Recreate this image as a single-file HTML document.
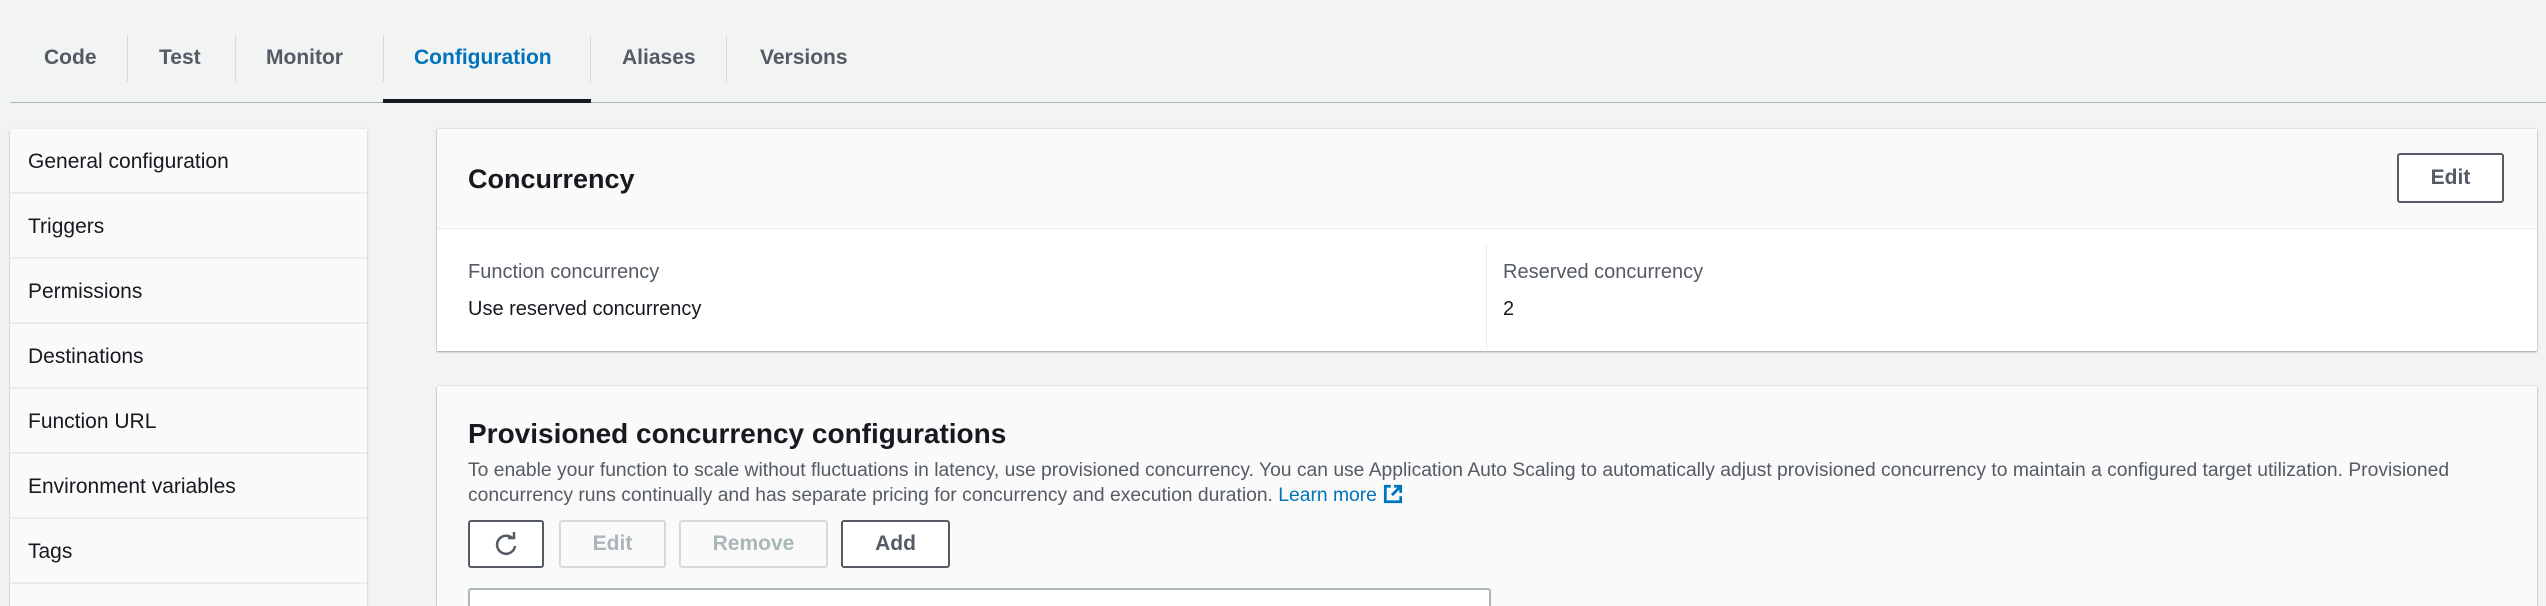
<!DOCTYPE html>
<html style="width:2546px;height:606px;overflow:hidden"><head><meta charset="utf-8"><style>
*{box-sizing:border-box;margin:0;padding:0}
body{width:2546px;height:606px;overflow:hidden;background:#f2f3f3;font-family:"Liberation Sans",sans-serif;color:#16191f;position:relative}
.abs{position:absolute}
.tab{position:absolute;top:44px;font-size:21px;font-weight:bold;color:#545b64;line-height:28px}
.sep{position:absolute;top:35px;width:1px;height:47px;background:#d5dbdb}
.side{position:absolute;left:10px;top:129px;width:357px;height:477px;overflow:hidden;background:#fafafa;box-shadow:0 1px 2px rgba(0,28,36,.3)}
.item{height:65px;border-bottom:2px solid #eaeded;font-size:21px;color:#16191f;padding:20px 0 0 18px;line-height:26px}
.panel{position:absolute;background:#fafafa;box-shadow:0 1px 2px rgba(0,28,36,.35),0 0 1px rgba(0,28,36,.2)}
.btn{position:absolute;border:2px solid #545b64;border-radius:3px;background:#fff;font-weight:bold;font-size:21px;color:#545b64;text-align:center}
.dis{border-color:#d5dbdb;color:#aab7b8;background:#fafafa}
</style></head><body>
<div class="tab" style="left:44px">Code</div>
<div class="sep" style="left:127px"></div>
<div class="tab" style="left:159px">Test</div>
<div class="sep" style="left:235px"></div>
<div class="tab" style="left:266px">Monitor</div>
<div class="sep" style="left:383px"></div>
<div class="tab" style="left:414px;color:#0073bb">Configuration</div>
<div class="sep" style="left:590px"></div>
<div class="tab" style="left:622px">Aliases</div>
<div class="sep" style="left:726px"></div>
<div class="tab" style="left:760px">Versions</div>
<div class="abs" style="left:10px;top:102px;width:2536px;height:1px;background:#aab7b8"></div>
<div class="abs" style="left:383px;top:99px;width:208px;height:4px;background:#16191f"></div>

<div class="side">
<div class="item">General configuration</div>
<div class="item">Triggers</div>
<div class="item">Permissions</div>
<div class="item">Destinations</div>
<div class="item">Function URL</div>
<div class="item">Environment variables</div>
<div class="item">Tags</div>
</div>

<div class="panel" style="left:437px;top:129px;width:2100px;height:222px">
<div class="abs" style="left:31px;top:35px;font-size:27px;font-weight:bold">Concurrency</div>
<div class="btn" style="left:1960px;top:24px;width:107px;height:50px;line-height:46px">Edit</div>
<div class="abs" style="left:0;top:99px;width:2100px;height:123px;background:#fff;border-top:1px solid #eaeded"></div>
<div class="abs" style="left:1049px;top:115px;width:1px;height:106px;background:#eaeded"></div>
<div class="abs" style="left:31px;top:132px;font-size:20px;color:#545b64">Function concurrency</div>
<div class="abs" style="left:31px;top:169px;font-size:20px">Use reserved concurrency</div>
<div class="abs" style="left:1066px;top:132px;font-size:20px;color:#545b64">Reserved concurrency</div>
<div class="abs" style="left:1066px;top:169px;font-size:20px">2</div>
</div>

<div class="panel" style="left:437px;top:386px;width:2100px;height:220px">
<div class="abs" style="left:31px;top:32px;font-size:28px;font-weight:bold">Provisioned concurrency configurations</div>
<div class="abs" style="left:31px;top:72px;width:2050px;font-size:19.3px;line-height:25px;color:#545b64">To enable your function to scale without fluctuations in latency, use provisioned concurrency. You can use Application Auto Scaling to automatically adjust provisioned concurrency to maintain a configured target utilization. Provisioned concurrency runs continually and has separate pricing for concurrency and execution duration. <span style="color:#0073bb">Learn more <svg width="22" height="22" viewBox="0 0 20 20" style="vertical-align:-4px"><path d="M8 3H3v14h14v-5M11 3h6v6M17 3l-8 8" fill="none" stroke="#0073bb" stroke-width="2.5"/></svg></span></div>
<div class="btn" style="left:31px;top:134px;width:76px;height:48px"><svg width="28" height="28" viewBox="0 0 28 28" style="margin-top:9px"><path d="M21 8A9 9 0 1 0 23 15" fill="none" stroke="#545b64" stroke-width="2.5"/><path d="M16 7h6V1" fill="none" stroke="#545b64" stroke-width="2.5"/></svg></div>
<div class="btn dis" style="left:122px;top:134px;width:107px;height:48px;line-height:44px">Edit</div>
<div class="btn dis" style="left:242px;top:134px;width:149px;height:48px;line-height:44px">Remove</div>
<div class="btn" style="left:404px;top:134px;width:109px;height:48px;line-height:44px">Add</div>
<div class="abs" style="left:31px;top:202px;width:1023px;height:18px;border:2px solid #aab7b8;border-bottom:none;border-radius:3px 3px 0 0;background:#fff"></div>
</div>
</body></html>
